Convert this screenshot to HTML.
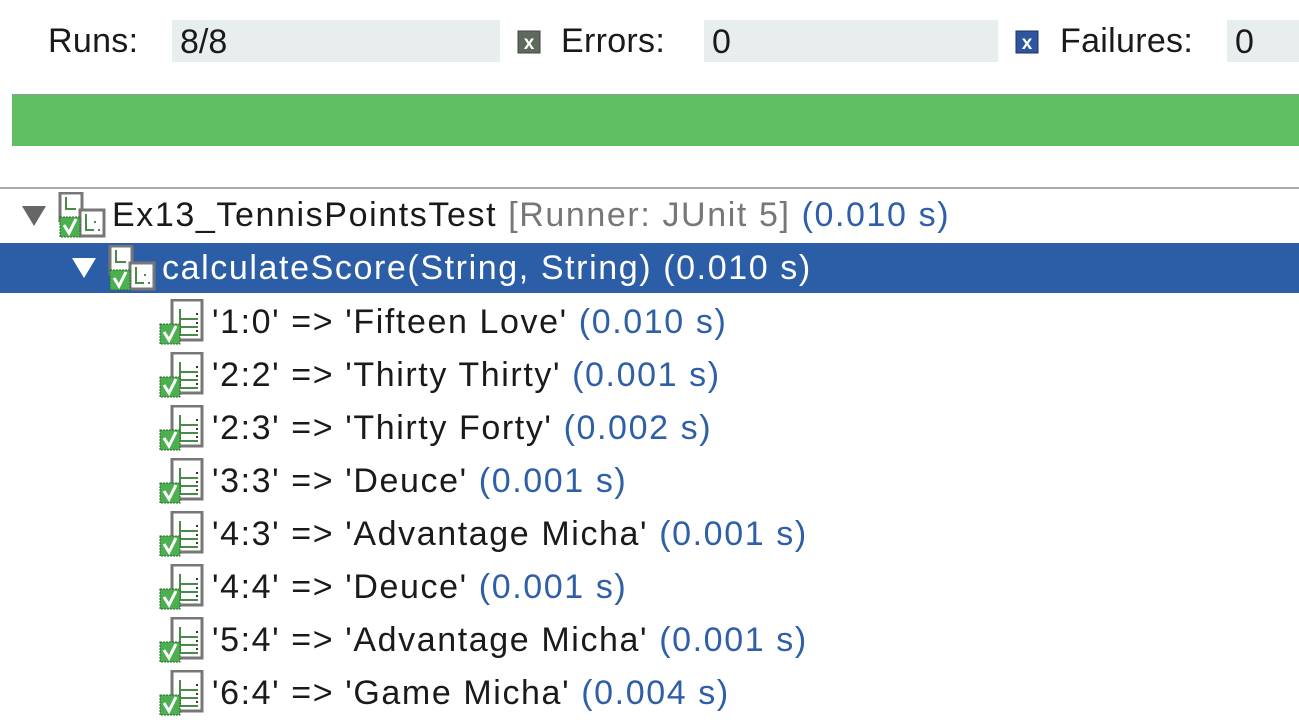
<!DOCTYPE html>
<html><head><meta charset="utf-8"><style>
body{margin:0;width:1299px;height:726px;background:#fff;font-family:"Liberation Sans",sans-serif;color:#1a1a1a;position:relative;overflow:hidden}
.a{position:absolute;white-space:nowrap}
.lbl{font-size:34px;top:22px;letter-spacing:0.3px}
.fld{position:absolute;top:20px;height:42px;background:#e8eeee;font-size:34px;line-height:44px;padding-left:8px;box-sizing:border-box}
.row{position:absolute;left:0;width:1299px;height:52px;font-size:34px;line-height:52px;letter-spacing:1.6px}
.t{color:#2f5fa6}
.g{color:#777}
.ic{position:absolute;top:3px}
.tri{position:absolute;width:0;height:0;border-left:12px solid transparent;border-right:12px solid transparent;border-top:20px solid #666;top:17px}
</style></head><body>
<div class="a lbl" style="left:48px">Runs:</div>
<div class="fld" style="left:172px;width:328px">8/8</div>
<svg class="a" style="left:517px;top:30px" width="24" height="24"><rect x="1" y="1" width="22" height="22" fill="#5f6a5f" stroke="#444"/><text x="12" y="19" font-size="19" font-weight="bold" fill="#fff" text-anchor="middle" font-family="Liberation Sans">x</text></svg>
<div class="a lbl" style="left:561px">Errors:</div>
<div class="fld" style="left:704px;width:294px">0</div>
<svg class="a" style="left:1015px;top:30px" width="24" height="24"><rect x="1" y="1" width="22" height="22" fill="#2e55a0" stroke="#1c2f66"/><text x="12" y="19" font-size="19" font-weight="bold" fill="#fff" text-anchor="middle" font-family="Liberation Sans">x</text></svg>
<div class="a lbl" style="left:1060px">Failures:</div>
<div class="fld" style="left:1227px;width:72px">0</div>
<div class="a" style="left:12px;top:94px;width:1287px;height:52px;background:#5fbf62;border-top:1px solid #999;box-sizing:border-box"></div>
<div class="a" style="left:0;top:187px;width:1299px;height:2px;background:#aaa"></div>

<svg width="0" height="0" style="position:absolute"><defs>
<g id="ti"><rect x="14" y="1" width="30" height="40" fill="#fff" stroke="#777" stroke-width="3"/>
<path d="M22 10v10h18M22 20v8h18M22 28v8h18" stroke="#4a8a4a" stroke-width="2" fill="none"/>
<path d="M38 15h2M38 24h2M38 32h2" stroke="#333" stroke-width="2"/>
<rect x="2" y="25" width="20" height="20" fill="#4caf50" stroke="#2a6a2a" stroke-dasharray="2 1"/>
<path d="M6 33l5 8 7-14" stroke="#fff" stroke-width="3" fill="none"/></g>
<g id="si"><rect x="2" y="1" width="22" height="28" fill="#fff" stroke="#777" stroke-width="3"/>
<path d="M8 5v12h10" stroke="#4a8a4a" stroke-width="2" fill="none"/>
<rect x="22" y="18" width="24" height="26" fill="#fff" stroke="#777" stroke-width="3"/>
<path d="M28 22v16h8M36 30h2M40 38h2" stroke="#4a8a4a" stroke-width="2" fill="none"/>
<rect x="2" y="25" width="20" height="20" fill="#4caf50" stroke="#2a6a2a" stroke-dasharray="2 1"/>
<path d="M6 33l5 8 7-14" stroke="#fff" stroke-width="3" fill="none"/></g>
</defs></svg>

<div class="row" style="top:189px"><div class="tri" style="left:22px"></div><svg class="ic" style="left:58px" width="48" height="46"><use href="#si"/></svg><span class="a" style="left:112px">Ex13_TennisPointsTest <span class="g">[Runner: JUnit 5]</span> <span class="t">(0.010 s)</span></span></div>
<div class="row" style="top:243px;height:50px;background:#2c5ea8;color:#fff;line-height:50px"><div class="tri" style="left:72px;border-top-color:#fff;top:15px"></div><svg class="ic" style="left:108px;top:2px" width="48" height="46"><use href="#si"/></svg><span class="a" style="left:162px">calculateScore(String, String) (0.010 s)</span></div>

<div class="row" style="top:296px"><svg class="ic" style="left:158px" width="48" height="46"><use href="#ti"/></svg><span class="a" style="left:212px">'1:0' =&gt; 'Fifteen Love' <span class="t">(0.010 s)</span></span></div>
<div class="row" style="top:349px"><svg class="ic" style="left:158px" width="48" height="46"><use href="#ti"/></svg><span class="a" style="left:212px">'2:2' =&gt; 'Thirty Thirty' <span class="t">(0.001 s)</span></span></div>
<div class="row" style="top:402px"><svg class="ic" style="left:158px" width="48" height="46"><use href="#ti"/></svg><span class="a" style="left:212px">'2:3' =&gt; 'Thirty Forty' <span class="t">(0.002 s)</span></span></div>
<div class="row" style="top:455px"><svg class="ic" style="left:158px" width="48" height="46"><use href="#ti"/></svg><span class="a" style="left:212px">'3:3' =&gt; 'Deuce' <span class="t">(0.001 s)</span></span></div>
<div class="row" style="top:508px"><svg class="ic" style="left:158px" width="48" height="46"><use href="#ti"/></svg><span class="a" style="left:212px">'4:3' =&gt; 'Advantage Micha' <span class="t">(0.001 s)</span></span></div>
<div class="row" style="top:561px"><svg class="ic" style="left:158px" width="48" height="46"><use href="#ti"/></svg><span class="a" style="left:212px">'4:4' =&gt; 'Deuce' <span class="t">(0.001 s)</span></span></div>
<div class="row" style="top:614px"><svg class="ic" style="left:158px" width="48" height="46"><use href="#ti"/></svg><span class="a" style="left:212px">'5:4' =&gt; 'Advantage Micha' <span class="t">(0.001 s)</span></span></div>
<div class="row" style="top:667px"><svg class="ic" style="left:158px" width="48" height="46"><use href="#ti"/></svg><span class="a" style="left:212px">'6:4' =&gt; 'Game Micha' <span class="t">(0.004 s)</span></span></div>
</body></html>
